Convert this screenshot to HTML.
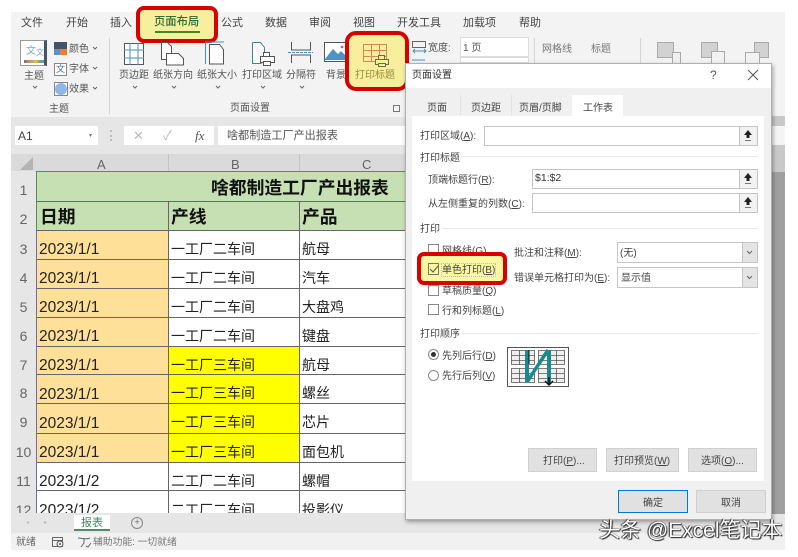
<!DOCTYPE html>
<html><head><meta charset="utf-8"><style>
html,body{margin:0;padding:0;width:798px;height:557px;overflow:hidden;background:#fff}
body{position:relative;font-family:"Liberation Sans","Noto Sans CJK SC",sans-serif;color:#333}
.t{position:absolute;white-space:nowrap;line-height:1;font-size:11px;color:#444}
.b{position:absolute;box-sizing:border-box}
.m{font-size:11px;top:18px;color:#444}
.r{font-size:10px;color:#555;margin-top:1px}
.s{font-size:14px;color:#222}
.n{font-size:15.500px;color:#222;margin-top:.5px}
.h{font-size:14px;color:#666;width:25px;text-align:center;left:11px}
.d{font-size:10px;color:#444;margin-top:2px}
.g{font-size:17.800px;font-weight:700;color:#111}
u{text-decoration:underline}
svg{position:absolute;overflow:visible}
</style></head><body>
<div id="wrap" style="position:absolute;left:0;top:0;width:798px;height:557px;filter:blur(.35px)">
<!-- ribbon -->
<div class="b" style="left:11px;top:12px;width:774px;height:105px;background:#f3f3f3"></div>
<div class="b" style="left:11px;top:117px;width:774px;height:37px;background:#e6e6e6"></div>
<span class="t m" style="left:21px">文件</span><span class="t m" style="left:66px">开始</span><span class="t m" style="left:110px">插入</span>
<span class="t m" style="left:221px">公式</span><span class="t m" style="left:265px">数据</span><span class="t m" style="left:309px">审阅</span><span class="t m" style="left:353px">视图</span><span class="t m" style="left:397px">开发工具</span><span class="t m" style="left:463px">加载项</span><span class="t m" style="left:519px">帮助</span>
<div class="b" style="left:136px;top:6px;width:82px;height:37px;background:#f7ef9e;border:4px solid #d90000;border-radius:8px"></div>
<span class="t" style="left:154px;top:17px;font-size:11.300px;color:#2f6b34;font-weight:500">页面布局</span>
<div class="b" style="left:155px;top:31px;width:45px;height:2px;background:#3f8a1f"></div>
<!-- theme group -->
<div class="b" style="left:20px;top:40px;width:27px;height:26px;background:#fff;border:1px solid #9a9a9a;border-right:3px solid #44546a"></div>
<span class="t" style="left:26px;top:47px;font-size:10px;color:#7fa4c8">文</span>
<span class="t" style="left:36px;top:49px;font-size:8px;color:#7fa4c8">文</span>
<div class="b" style="left:24px;top:60px;width:20px;height:3px;background:linear-gradient(90deg,#4472c4,#ed7d31,#a5a5a5,#ffc000,#5b9bd5,#70ad47)"></div>
<span class="t r" style="left:24px;top:71px">主题</span>
<div class="b" style="left:54px;top:42px;width:13px;height:7px;background:#44546a"></div>
<div class="b" style="left:54px;top:49px;width:6px;height:6px;background:#5b8fd0"></div>
<div class="b" style="left:60px;top:49px;width:7px;height:6px;background:#ed7d31"></div>
<span class="t r" style="left:69px;top:44px">颜色</span>
<div class="b" style="left:54px;top:63px;width:13px;height:13px;border:1px solid #888;background:#fff"></div>
<span class="t" style="left:56px;top:65px;font-size:9px;color:#3d6fa0">文</span>
<span class="t r" style="left:69px;top:64px">字体</span>
<div class="b" style="left:54px;top:82px;width:14px;height:14px;border:1px solid #888;background:#fff"></div>
<div class="b" style="left:55px;top:83px;width:12px;height:12px;border-radius:50%;background:#8db8e8"></div>
<span class="t r" style="left:69px;top:84px">效果</span>
<span class="t r" style="left:49px;top:104px">主题</span>
<div class="b" style="left:109px;top:38px;width:1px;height:76px;background:#d4d4d4"></div>
<!-- page setup icons -->
<svg style="left:0;top:0" width="798" height="117" fill="none" stroke-width="1">
 <g stroke="#666"><path d="M33 86l2 2 2-2M93 47l2 2 2-2M93 67l2 2 2-2M93 87l2 2 2-2M133 86l2 2 2-2M172 86l2 2 2-2M216 86l2 2 2-2M261 86l2 2 2-2M300 86l2 2 2-2"/></g>
 <g stroke="#555"><rect x="124.500" y="43.500" width="19" height="21" fill="#fff"/></g>
 <g stroke="#3f93c4"><path d="M124 50h20M124 58h20M130 43v22M138 43v22"/></g>
 <g stroke="#555" fill="#fff"><path d="M161.500 42.500h6l4 4v7h-5v6h-5z"/><path d="M166.500 53.500h12l5 5v6.500h-17z"/></g>
 <g stroke="#3f93c4"><path d="M205.500 43v21M205 42h19"/></g>
 <path d="M209.500 44.500h10l4 5v14.500h-14z" stroke="#555" fill="#fff"/>
 <path d="M252.500 42.500h8l4 5v6M252.500 42.500v21h9" stroke="#3f7fa8" fill="#fff"/>
 <g stroke="#555" fill="#fff"><rect x="263.500" y="52.500" width="6" height="4"/><rect x="260.500" y="56.500" width="14" height="6"/><rect x="263.500" y="61.500" width="7" height="4"/></g>
 <g stroke="#555"><path d="M291.500 42v8h19v-8M291.500 63v-8h19v8"/></g>
 <path d="M288 52.500h25" stroke="#3f93c4" stroke-dasharray="3 1"/>
 <rect x="324.500" y="42.500" width="22" height="19" stroke="#555" fill="#fff"/>
 <path d="M325 59l8-10 5 5 3-3 6 6v3h-22z" fill="#4a94c8"/>
 <circle cx="342" cy="47" r="1.300" fill="#d9534f"/>
</svg>
<span class="t r" style="left:119px;top:70px">页边距</span><span class="t r" style="left:153px;top:70px">纸张方向</span><span class="t r" style="left:197px;top:70px">纸张大小</span><span class="t r" style="left:242px;top:70px">打印区域</span><span class="t r" style="left:286px;top:70px">分隔符</span><span class="t r" style="left:326px;top:70px">背景</span>
<span class="t r" style="left:230px;top:103px">页面设置</span>
<div class="b" style="left:393px;top:105px;width:7px;height:7px;border:1px solid #777"></div>
<!-- 打印标题 highlight -->
<div class="b" style="left:345px;top:31px;width:64px;height:60px;background:#f7ef9e;border:4px solid #d90000;border-radius:11px"></div>
<svg style="left:0;top:0" width="798" height="117" fill="none">
 <g stroke="#d08a50"><path d="M363.500 44.500h23v17h-23zM363.500 50.500h23M363.500 56.500h23M371.500 44.500v17M379.500 44.500v17"/></g>
 <g stroke="#6a6a58" fill="#f7ef9e"><rect x="378.500" y="55.500" width="6" height="4"/><rect x="375.500" y="59.500" width="13" height="5"/><rect x="378.500" y="63.500" width="7" height="3"/></g>
</svg>
<span class="t r" style="left:355px;top:70px;color:#9a8c3c">打印标题</span>
<!-- scale group -->
<svg style="left:0;top:0" width="798" height="80" fill="none">
 <path d="M412.500 41.500h13v6h-13z" stroke="#666"/><path d="M413 51h13M415 49l-2 2 2 2M424 49l2 2-2 2" stroke="#3f93c4"/>
 <path d="M412 60h13" stroke="#3f93c4"/>
 <path d="M522 47l2 2 2-2" stroke="#555"/>
</svg>
<span class="t r" style="left:428px;top:43px">宽度:</span>
<div class="b" style="left:460px;top:37px;width:69px;height:20px;background:#fff;border:1px solid #ddd"></div>
<span class="t r" style="left:463px;top:43px">1 页</span>
<div class="b" style="left:460px;top:57px;width:69px;height:6px;background:#fff;border:1px solid #ddd"></div>
<div class="b" style="left:534px;top:38px;width:1px;height:25px;background:#d4d4d4"></div>
<span class="t r" style="left:542px;top:44px;color:#777">网格线</span><span class="t r" style="left:591px;top:44px;color:#777">标题</span>
<div class="b" style="left:640px;top:38px;width:1px;height:25px;background:#d4d4d4"></div>
<div class="b" style="left:657px;top:42px;width:17px;height:16px;background:#d2d2d2;border:1px solid #aaa"></div>
<div class="b" style="left:672px;top:52px;width:9px;height:11px;border:1px solid #aaa;border-bottom:0;background:#f0f0f0"></div>
<div class="b" style="left:701px;top:42px;width:17px;height:16px;background:#d2d2d2;border:1px solid #aaa"></div>
<div class="b" style="left:711px;top:51px;width:14px;height:12px;border:1px solid #aaa;border-bottom:0;background:#f2f2f2"></div>
<div class="b" style="left:754px;top:42px;width:15px;height:16px;background:#d2d2d2;border:1px solid #aaa"></div>
<div class="b" style="left:745px;top:52px;width:15px;height:11px;border:1px solid #aaa;border-bottom:0;background:#f2f2f2"></div>
<!-- formula bar -->
<div class="b" style="left:15px;top:126px;width:83px;height:19px;background:#fff"></div>
<span class="t" style="left:18px;top:130px;font-size:12px;color:#444">A1</span><span class="t" style="left:89px;top:133px;font-size:6px;color:#777">▾</span>
<div class="b" style="left:124px;top:126px;width:90px;height:19px;background:#fff"></div>
<div class="b" style="left:110px;top:130px;width:1px;height:11px;border-left:2px dotted #bbb"></div>
<span class="t" style="left:133px;top:129px;font-size:13px;color:#bbb">✕</span><span class="t" style="left:163px;top:129px;font-size:13px;color:#bbb">✓</span>
<span class="t" style="left:195px;top:129px;font-size:13px;color:#555;font-family:'Liberation Serif',serif;font-style:italic">fx</span>
<div class="b" style="left:218px;top:126px;width:567px;height:19px;background:#fff"></div>
<span class="t" style="left:227px;top:130.500px;font-size:11.100px;color:#555">啥都制造工厂产出报表</span>
<!-- headers -->
<div class="b" style="left:11px;top:154px;width:774px;height:17px;background:#dadada"></div>
<div class="b" style="left:11px;top:171px;width:25px;height:342px;background:#e6e6e6"></div>
<div class="b" style="left:20px;top:157px;width:0;height:0;border-style:solid;border-width:0 0 13px 13px;border-color:transparent transparent #b4b4b4 transparent"></div>
<span class="t" style="left:97px;top:158px;font-size:13px;color:#666">A</span><span class="t" style="left:231px;top:158px;font-size:13px;color:#666">B</span><span class="t" style="left:362px;top:158px;font-size:13px;color:#666">C</span>
<div class="b" style="left:168px;top:154px;width:1px;height:17px;background:#c4c4c4"></div><div class="b" style="left:299px;top:154px;width:1px;height:17px;background:#c4c4c4"></div>
<!-- fills -->
<div class="b" style="left:36px;top:171px;width:749px;height:59px;background:#c6e0b4"></div>
<div class="b" style="left:36px;top:230px;width:132px;height:232px;background:#ffe099"></div>
<div class="b" style="left:36px;top:462px;width:132px;height:51px;background:#fff"></div>
<div class="b" style="left:168px;top:230px;width:617px;height:283px;background:#fff"></div>
<div class="b" style="left:168px;top:346px;width:131px;height:116px;background:#ffff00"></div>
<!-- grid -->
<div class="b" style="left:36px;top:171px;width:749px;height:1px;background:#548d5c"></div>
<div class="b" style="left:36px;top:201px;width:749px;height:1px;background:#4f7d54"></div>
<div class="b" style="left:36px;top:230px;width:749px;height:1px;background:#666"></div>
<div class="b" style="left:36px;top:259px;width:749px;height:1px;background:#666"></div>
<div class="b" style="left:36px;top:288px;width:749px;height:1px;background:#666"></div>
<div class="b" style="left:36px;top:317px;width:749px;height:1px;background:#666"></div>
<div class="b" style="left:36px;top:346px;width:749px;height:1px;background:#666"></div>
<div class="b" style="left:36px;top:374px;width:749px;height:1px;background:#666"></div>
<div class="b" style="left:36px;top:403px;width:749px;height:1px;background:#666"></div>
<div class="b" style="left:36px;top:433px;width:749px;height:1px;background:#666"></div>
<div class="b" style="left:36px;top:462px;width:749px;height:1px;background:#666"></div>
<div class="b" style="left:36px;top:490px;width:749px;height:1px;background:#666"></div>
<div class="b" style="left:36px;top:171px;width:1px;height:59px;background:#548d5c"></div>
<div class="b" style="left:36px;top:230px;width:1px;height:283px;background:#6a6ac0"></div>
<div class="b" style="left:168px;top:201px;width:1px;height:312px;background:#666"></div>
<div class="b" style="left:299px;top:201px;width:1px;height:312px;background:#666"></div>
<!-- row nums -->
<span class="t h" style="top:183px">1</span><span class="t h" style="top:212px">2</span><span class="t h" style="top:242px">3</span><span class="t h" style="top:271px">4</span><span class="t h" style="top:300px">5</span><span class="t h" style="top:329px">6</span><span class="t h" style="top:358px">7</span><span class="t h" style="top:386px">8</span><span class="t h" style="top:415px">9</span><span class="t h" style="top:445px">10</span><span class="t h" style="top:474px">11</span><span class="t h" style="top:503px">12</span>
<!-- cells -->
<span class="t g" style="left:211px;top:180px">啥都制造工厂产出报表</span>
<span class="t g" style="left:40px;top:209px">日期</span><span class="t g" style="left:171px;top:209px">产线</span><span class="t g" style="left:302px;top:209px">产品</span>
<span class="t n" style="left:39px;top:241px">2023/1/1</span><span class="t s" style="left:171px;top:242px">一工厂二车间</span><span class="t s" style="left:302px;top:242px">航母</span>
<span class="t n" style="left:39px;top:270px">2023/1/1</span><span class="t s" style="left:171px;top:271px">一工厂二车间</span><span class="t s" style="left:302px;top:271px">汽车</span>
<span class="t n" style="left:39px;top:299px">2023/1/1</span><span class="t s" style="left:171px;top:300px">一工厂二车间</span><span class="t s" style="left:302px;top:300px">大盘鸡</span>
<span class="t n" style="left:39px;top:328px">2023/1/1</span><span class="t s" style="left:171px;top:329px">一工厂二车间</span><span class="t s" style="left:302px;top:329px">键盘</span>
<span class="t n" style="left:39px;top:357px">2023/1/1</span><span class="t s" style="left:171px;top:358px">一工厂三车间</span><span class="t s" style="left:302px;top:358px">航母</span>
<span class="t n" style="left:39px;top:386px">2023/1/1</span><span class="t s" style="left:171px;top:386px">一工厂三车间</span><span class="t s" style="left:302px;top:386px">螺丝</span>
<span class="t n" style="left:39px;top:415px">2023/1/1</span><span class="t s" style="left:171px;top:415px">一工厂三车间</span><span class="t s" style="left:302px;top:415px">芯片</span>
<span class="t n" style="left:39px;top:444px">2023/1/1</span><span class="t s" style="left:171px;top:445px">一工厂三车间</span><span class="t s" style="left:302px;top:445px">面包机</span>
<span class="t n" style="left:39px;top:473px">2023/1/2</span><span class="t s" style="left:171px;top:474px">二工厂二车间</span><span class="t s" style="left:302px;top:474px">螺帽</span>
<span class="t n" style="left:39px;top:502px">2023/1/2</span><span class="t s" style="left:171px;top:503px">二工厂二车间</span><span class="t s" style="left:302px;top:503px">投影仪</span>
<!-- tab/status -->
<div class="b" style="left:11px;top:513px;width:774px;height:20px;background:#e6e6e6"></div>
<div class="b" style="left:11px;top:533px;width:774px;height:17px;background:#f1f1f1"></div>
<div class="b" style="left:74px;top:515px;width:36px;height:16px;background:#fff;border-bottom:2px solid #4f8a68"></div>
<span class="t" style="left:81px;top:518px;font-size:11px;color:#3f8a60">报表</span>
<span class="t" style="left:26px;top:520px;font-size:6px;color:#bbb">◂</span><span class="t" style="left:44px;top:520px;font-size:6px;color:#bbb">▸</span>
<div class="b" style="left:131px;top:517px;width:12px;height:12px;border:1px solid #888;border-radius:50%"></div><span class="t" style="left:134.500px;top:518px;font-size:9px;color:#666">+</span>
<span class="t" style="left:16px;top:538px;font-size:10px;color:#666">就绪</span>
<svg style="left:0;top:0" width="798" height="557" fill="none"><rect x="52.500" y="537.500" width="10" height="9" stroke="#666"/><path d="M52 540.500h10" stroke="#666"/><circle cx="60" cy="544" r="3" stroke="#555" fill="#f1f1f1"/><circle cx="60" cy="544" r="1" fill="#555"/><path d="M78 538c4 0 8 2 12 0M84 538v5l-3 4M86 546l2 1 3-4" stroke="#666"/></svg>
<span class="t" style="left:93px;top:538px;font-size:9.800px;color:#777">辅助功能: 一切就绪</span>
<!-- dialog shadow area -->
<div class="b" style="left:772px;top:116px;width:13px;height:10px;background:#c8c8c8"></div>
<div class="b" style="left:772px;top:126px;width:13px;height:19px;background:#f4f4f4"></div>
<div class="b" style="left:772px;top:145px;width:13px;height:27px;background:#c9c9c9"></div>
<div class="b" style="left:772px;top:172px;width:13px;height:342px;background:#a0a0a0"></div>
<!-- dialog -->
<div class="b" style="left:405px;top:63px;width:367px;height:457px;background:#f0f0f0;border:1px solid #b0b0b0;box-shadow:1px 2px 4px rgba(0,0,0,.35)"></div>
<div class="b" style="left:406px;top:64px;width:365px;height:24px;background:#fff"></div>
<span class="t" style="left:412px;top:71px;font-size:10px;color:#333">页面设置</span>
<span class="t" style="left:710px;top:69px;font-size:12px;color:#555">?</span>
<svg style="left:0;top:0" width="798" height="557" fill="none"><path d="M748 70l10 10M758 70l-10 10" stroke="#555"/></svg>
<div class="b" style="left:412px;top:116px;width:352px;height:365px;background:#fff"></div>
<div class="b" style="left:572px;top:95px;width:51px;height:22px;background:#fff"></div>
<span class="t d" style="left:427px;top:102px">页面</span><span class="t d" style="left:471px;top:102px">页边距</span><span class="t d" style="left:519px;top:102px">页眉/页脚</span><span class="t d" style="left:583px;top:102px">工作表</span>
<div class="b" style="left:460px;top:95px;width:1px;height:21px;background:#e2e2e2"></div><div class="b" style="left:511px;top:95px;width:1px;height:21px;background:#e2e2e2"></div>
<span class="t d" style="left:420px;top:130px">打印区域(<u>A</u>):</span>
<span class="t d" style="left:420px;top:152px">打印标题</span><div class="b" style="left:461px;top:156px;width:297px;height:1px;background:#e8e8e8"></div>
<span class="t d" style="left:428px;top:174px">顶端标题行(<u>R</u>):</span>
<span class="t d" style="left:428px;top:198px">从左侧重复的列数(<u>C</u>):</span>
<!-- inputs -->
<div class="b" style="left:484px;top:126px;width:274px;height:20px;background:#fff;border:1px solid #c4c4c4"></div>
<div class="b" style="left:532px;top:169px;width:226px;height:20px;background:#fff;border:1px solid #c4c4c4"></div>
<div class="b" style="left:532px;top:193px;width:226px;height:20px;background:#fff;border:1px solid #c4c4c4"></div>
<span class="t" style="left:535px;top:173px;font-size:10.500px;color:#333">$1:$2</span>
<div class="b" style="left:739px;top:126px;width:19px;height:20px;background:#f2f2f2;border:1px solid #c4c4c4"></div>
<div class="b" style="left:739px;top:169px;width:19px;height:20px;background:#f2f2f2;border:1px solid #c4c4c4"></div>
<div class="b" style="left:739px;top:193px;width:19px;height:20px;background:#f2f2f2;border:1px solid #c4c4c4"></div>
<svg style="left:0;top:0" width="798" height="557"><g fill="#222"><path d="M748 130l4 5h-2.500v3h-3v-3h-2.500z"/><path d="M748 173l4 5h-2.500v3h-3v-3h-2.500z"/><path d="M748 197l4 5h-2.500v3h-3v-3h-2.500z"/></g><g stroke="#777"><path d="M745 140.500h6M745 183.500h6M745 207.500h6"/></g></svg>
<span class="t d" style="left:420px;top:223px">打印</span><div class="b" style="left:443px;top:228px;width:315px;height:1px;background:#e8e8e8"></div>
<div class="b" style="left:428px;top:244px;width:11px;height:11px;border:1px solid #888;background:#fff"></div>
<span class="t d" style="left:442px;top:245px">网格线(<u>G</u>)</span>
<div class="b" style="left:428px;top:285px;width:11px;height:11px;border:1px solid #888;background:#fff"></div>
<span class="t d" style="left:442px;top:285px">草稿质量(<u>Q</u>)</span>
<div class="b" style="left:428px;top:304px;width:11px;height:11px;border:1px solid #888;background:#fff"></div>
<span class="t d" style="left:442px;top:305px">行和列标题(<u>L</u>)</span>
<div class="b" style="left:417px;top:252px;width:90px;height:33px;background:#fbf7a0;border:4px solid #d90000;border-radius:7px"></div>
<div class="b" style="left:428px;top:263px;width:11px;height:12px;border:1px solid #777"></div>
<svg style="left:0;top:0" width="798" height="557" fill="none"><path d="M430 269l3 3 5-6" stroke="#555"/></svg>
<div class="b" style="left:441px;top:263px;width:55px;height:14px;border:1px dotted #bbb"></div>
<span class="t d" style="left:442px;top:264px">单色打印(<u>B</u>)</span>
<span class="t d" style="left:514px;top:247px">批注和注释(<u>M</u>):</span>
<span class="t d" style="left:514px;top:272px">错误单元格打印为(<u>E</u>):</span>
<div class="b" style="left:617px;top:242px;width:141px;height:21px;background:#fff;border:1px solid #c4c4c4"></div>
<div class="b" style="left:617px;top:267px;width:141px;height:21px;background:#fff;border:1px solid #c4c4c4"></div>
<div class="b" style="left:742px;top:242px;width:16px;height:21px;background:#e4e4e4;border:1px solid #c4c4c4"></div>
<div class="b" style="left:742px;top:267px;width:16px;height:21px;background:#e4e4e4;border:1px solid #c4c4c4"></div>
<svg style="left:0;top:0" width="798" height="557" fill="none"><path d="M747 251l2.500 2.500 2.500-2.500M747 276l2.500 2.500 2.500-2.500" stroke="#666"/></svg>
<span class="t d" style="left:620px;top:247px">(无)</span><span class="t d" style="left:621px;top:272px">显示值</span>
<span class="t d" style="left:420px;top:328px">打印顺序</span><div class="b" style="left:462px;top:333px;width:296px;height:1px;background:#e8e8e8"></div>
<div class="b" style="left:428px;top:349px;width:11px;height:11px;border:1px solid #888;border-radius:50%;background:#fff"></div><div class="b" style="left:431px;top:352px;width:5px;height:5px;border-radius:50%;background:#333"></div>
<span class="t d" style="left:442px;top:350px">先列后行(<u>D</u>)</span>
<div class="b" style="left:428px;top:370px;width:11px;height:11px;border:1px solid #888;border-radius:50%;background:#fff"></div>
<span class="t d" style="left:442px;top:370px">先行后列(<u>V</u>)</span>
<!-- order picture -->
<div class="b" style="left:507px;top:347px;width:62px;height:40px;background:#fff;border:1px solid #555"></div>
<svg style="left:0;top:0" width="798" height="557" fill="none">
 <g fill="#efefef" stroke="#555" stroke-width=".8"><path d="M511.500 350.500h23v14h-23zM538.500 350.500h26v14h-26zM511.500 368.500h23v14h-23zM538.500 368.500h26v14h-26z"/><path d="M511.500 355.500h23M511.500 360.500h23M519.500 350.500v14M527.500 350.500v14M538.500 355.500h26M538.500 360.500h26M547.500 350.500v14M556.500 350.500v14M511.500 373.500h23M511.500 378.500h23M519.500 368.500v14M527.500 368.500v14M538.500 373.500h26M538.500 378.500h26M547.500 368.500v14M556.500 368.500v14"/></g>
 <path d="M527 350v32" stroke="#1a8a8a" stroke-width="4"/>
 <path d="M527 382l21-32" stroke="#1a8a8a" stroke-width="3.500"/>
 <path d="M549 350v32" stroke="#1a8a8a" stroke-width="4"/>
 <path d="M549 377v8M545 381l4 4 4-4" stroke="#111" stroke-width="1.500"/>
 <path d="M529 350v14" stroke="#111" stroke-width="1"/>
</svg>
<!-- buttons -->
<div class="b" style="left:528px;top:448px;width:69px;height:24px;background:#e1e1e1;border:1px solid #d0d0d0"></div>
<div class="b" style="left:606px;top:448px;width:73px;height:24px;background:#e1e1e1;border:1px solid #d0d0d0"></div>
<div class="b" style="left:688px;top:448px;width:69px;height:24px;background:#e1e1e1;border:1px solid #d0d0d0"></div>
<span class="t d" style="left:543px;top:455px">打印(<u>P</u>)...</span><span class="t d" style="left:614px;top:455px">打印预览(<u>W</u>)</span><span class="t d" style="left:701px;top:455px">选项(<u>O</u>)...</span>
<div class="b" style="left:618px;top:490px;width:70px;height:23px;background:#e1e1e1;border:1px solid #0078d7"></div>
<div class="b" style="left:696px;top:490px;width:70px;height:23px;background:#e1e1e1;border:1px solid #d0d0d0"></div>
<span class="t d" style="left:643px;top:497px">确定</span><span class="t d" style="left:721px;top:497px">取消</span>
</div>
<!-- watermark -->
<span class="t" style="left:599px;top:520px;font-size:21px;color:#fff;text-shadow:0 0 1px #222,1px 1px 1px #222,-1px 0 1px #222">头条 @Excel笔记本</span>
</body></html>
